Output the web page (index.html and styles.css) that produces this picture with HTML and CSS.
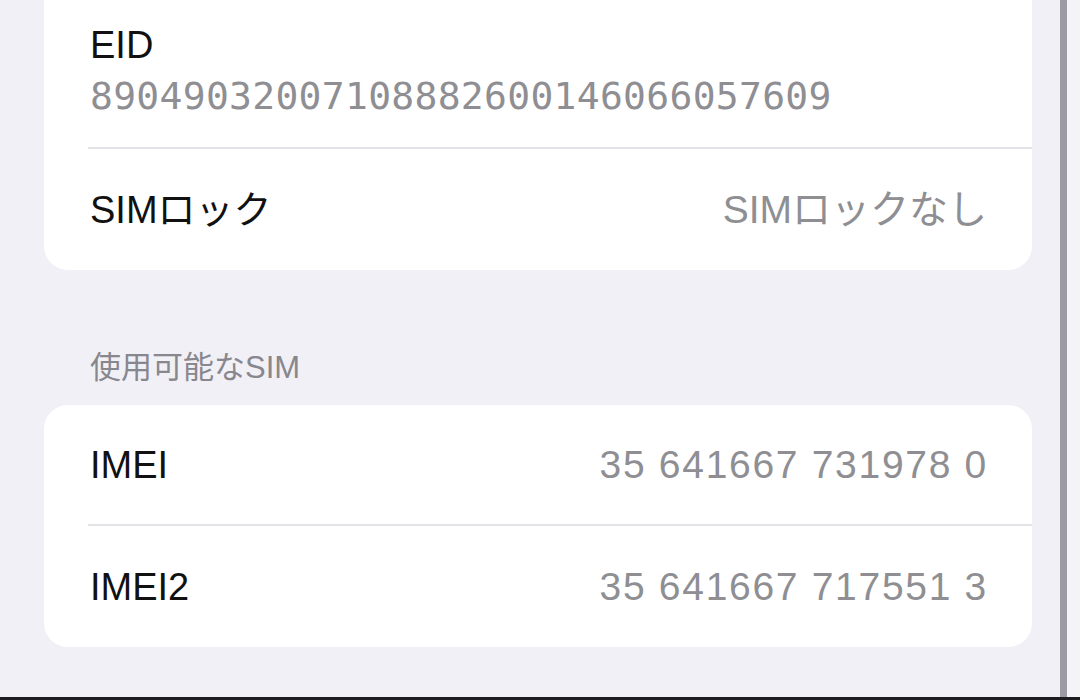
FILE: index.html
```html
<!DOCTYPE html>
<html lang="ja">
<head>
<meta charset="utf-8">
<title>SIM</title>
<link rel="stylesheet" href="styles.css">
</head>
<body>
<div class="frame">
  <div class="main">
    <div class="card card-top">
      <div class="eid-row">
        <div class="label">EID</div>
        <div class="eid-num">89049032007108882600146066057609</div>
      </div>
      <div class="row last">
        <span class="label">SIMロック</span>
        <span class="value">SIMロックなし</span>
      </div>
    </div>
    <div class="section-header">使用可能なSIM</div>
    <div class="card">
      <div class="row">
        <span class="label">IMEI</span>
        <span class="value num">35 641667 731978 0</span>
      </div>
      <div class="row last">
        <span class="label">IMEI2</span>
        <span class="value num">35 641667 717551 3</span>
      </div>
    </div>
  </div>
  <div class="edge"></div>
  <div class="after"></div>
</div>
<div class="bottom-line"></div>
</body>
</html>
```
FILE: styles.css
```css
html, body {
  margin: 0;
  padding: 0;
}
body {
  width: 1080px;
  height: 700px;
  overflow: hidden;
  background: #f1f0f7;
  font-family: "Liberation Sans", "Noto Sans CJK JP", sans-serif;
}
.frame {
  display: flex;
  height: 697px;
}
.main {
  flex: 0 0 1060px;
  box-sizing: border-box;
  padding: 0 28px 0 44px;
}
.edge {
  flex: 0 0 7px;
  background: #9c9ba5;
}
.after {
  flex: 1;
  background: #f4f3f8;
}
.bottom-line {
  height: 3px;
  background: #1d1d1f;
}
.card {
  background: #ffffff;
  border-radius: 24px;
  overflow: hidden;
}
.card-top {
  margin-top: -30px;
}
.eid-row {
  margin-left: 44px;
  padding: 52px 45px 28px 2px;
  border-bottom: 2px solid #e4e3e8;
}
.label {
  font-size: 38px;
  line-height: 46px;
  color: #111111;
}
.eid-num {
  font-family: "DejaVu Sans Mono", "Liberation Mono", monospace;
  font-size: 38px;
  line-height: 46px;
  color: #8e8e93;
  margin-top: 5px;
  letter-spacing: 0.3px;
}
.row {
  margin-left: 44px;
  padding: 0 45px 0 2px;
  height: 119px;
  display: flex;
  align-items: center;
  justify-content: space-between;
  border-bottom: 2px solid #e4e3e8;
}
.row.last {
  border-bottom: none;
  height: 121px;
}
.value {
  font-size: 39px;
  line-height: 46px;
  color: #8e8e93;
}
.value.num {
  letter-spacing: 1.7px;
  margin-right: -1px;
}
.section-header {
  font-size: 31px;
  line-height: 36px;
  color: #88878d;
  padding: 80px 0 0 46px;
  height: 55px;
}
```
